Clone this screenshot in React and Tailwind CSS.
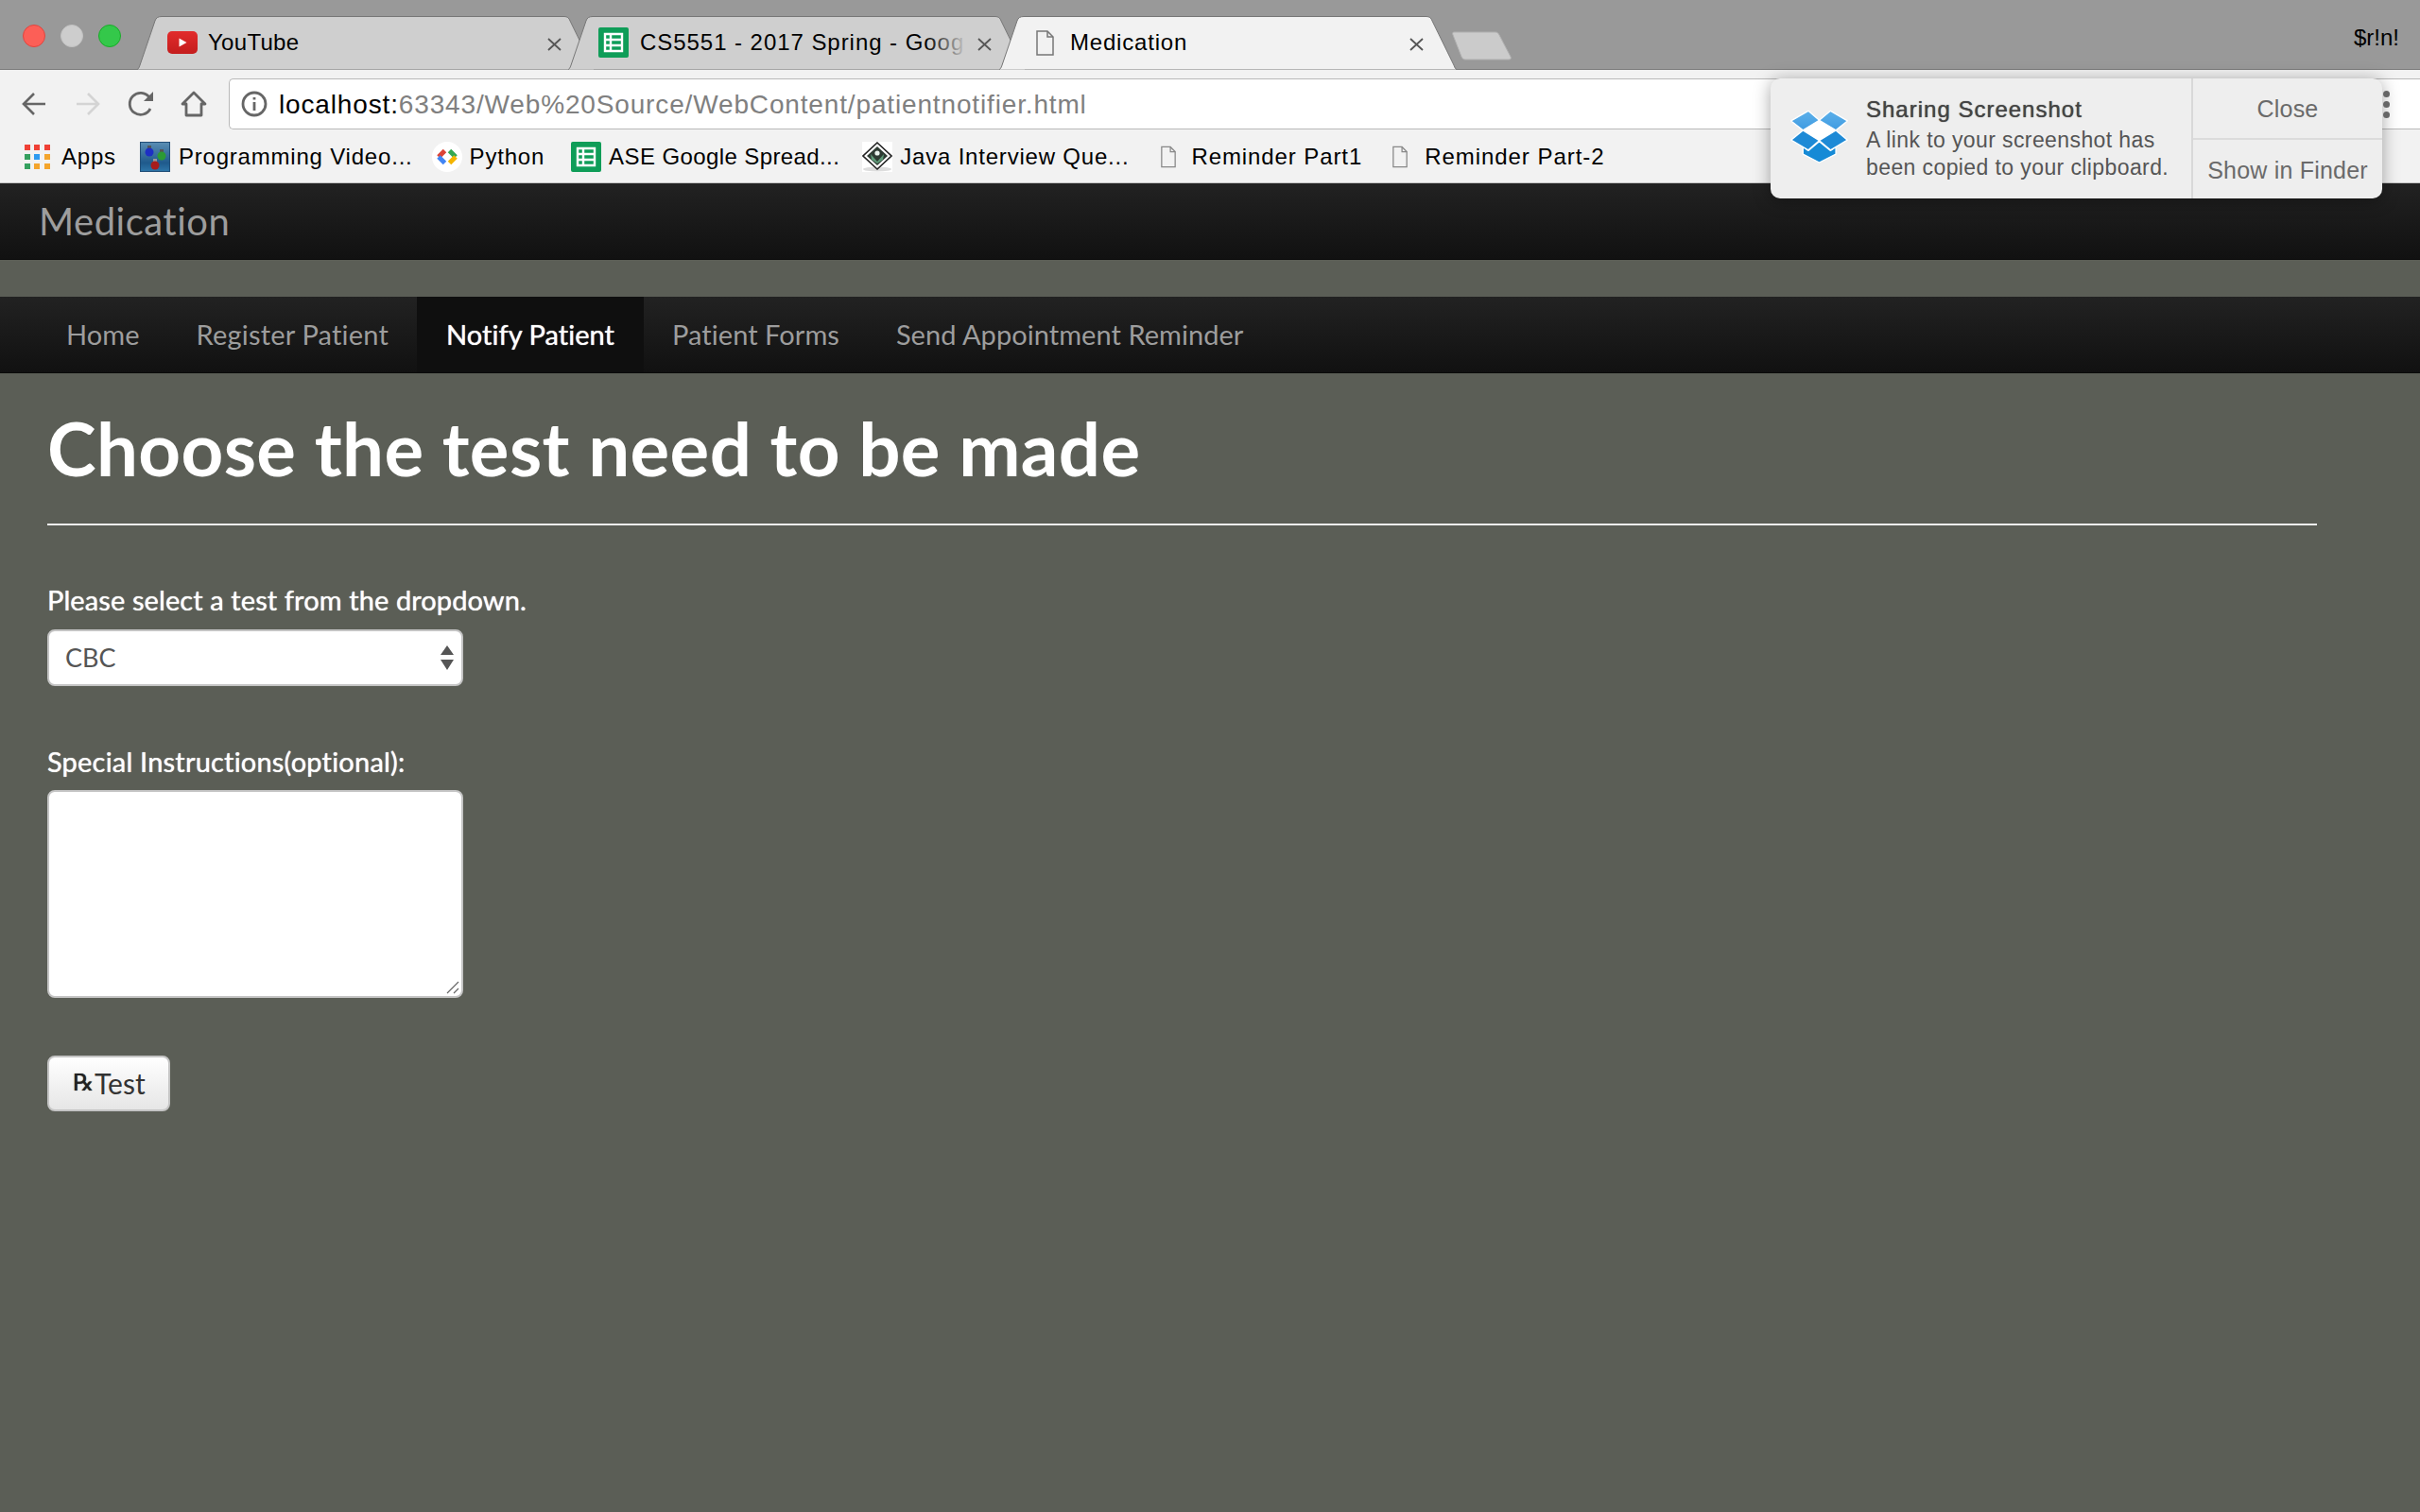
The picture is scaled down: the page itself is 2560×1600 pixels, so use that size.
import React from 'react'

const ubuntu = "font-['Lato','Noto_Sans',sans-serif]"
const chrome = "font-['Liberation_Sans',Arial,sans-serif]"

function TabShape({ fill, stroke }) {
  return (
    <svg className="absolute inset-0" width="484" height="57" viewBox="0 0 484 57">
      <path d="M0 56.5 C1 56.5 2 55 3 52 L19 5 C20 2 22 0.5 26 0.5 L452 0.5 C455 0.5 457 2 458 5 L481 52 C482 55 483 56.5 484 56.5" fill={fill} stroke={stroke} strokeWidth="1" />
    </svg>
  )
}

function FileIcon({ w = 19, h = 27, color = '#777' }) {
  return (
    <svg width={w} height={h} viewBox="0 0 19 27" fill="none" stroke={color} strokeWidth="1.5">
      <path d="M1 1 H12 L18 7 V26 H1 Z" />
      <path d="M12 1 V7 H18" />
    </svg>
  )
}

function SheetsIcon() {
  return (
    <svg width="32" height="32" viewBox="0 0 32 32">
      <rect width="32" height="32" rx="2" fill="#0f9d58" />
      <path d="M7 7 H25 V25 H7 Z M7 13 H25 M7 19 H25 M13 7 V25" fill="none" stroke="#fff" strokeWidth="2.4" />
    </svg>
  )
}

function YoutubeIcon() {
  return (
    <svg width="32" height="24" viewBox="0 0 32 24">
      <defs>
        <linearGradient id="ytRed" x1="0" y1="0" x2="0" y2="1">
          <stop offset="0" stopColor="#e22c2c" />
          <stop offset="1" stopColor="#c41d1d" />
        </linearGradient>
      </defs>
      <rect width="32" height="24" rx="5" fill="url(#ytRed)" />
      <path d="M12.5 7.5 L20.5 12 L12.5 16.5 Z" fill="#fff" />
    </svg>
  )
}

function CloseIcon() {
  return (
    <svg width="15" height="14" viewBox="0 0 15 14" stroke="#555" strokeWidth="1.8">
      <path d="M1 1 L14 13 M14 1 L1 13" />
    </svg>
  )
}

function AppsIcon() {
  const colors = ['#ef4136', '#ef4136', '#ef4136', '#35a05f', '#2e9bf0', '#f4a52c', '#35a05f', '#f4a52c', '#f4a52c']
  return (
    <div className="grid grid-cols-3 gap-[4px] w-[27px]">
      {colors.map((c, i) => (
        <svg key={i} width="6" height="6"><rect width="6" height="6" fill={c} /></svg>
      ))}
    </div>
  )
}

function ProgrammingIcon() {
  return (
    <svg width="32" height="32" viewBox="0 0 32 32">
      <defs>
        <linearGradient id="progBg" x1="0" y1="0" x2="0" y2="1">
          <stop offset="0" stopColor="#5c8fb5" />
          <stop offset="0.7" stopColor="#1f5a8c" />
          <stop offset="1" stopColor="#2f78ab" />
        </linearGradient>
      </defs>
      <rect width="32" height="32" fill="url(#progBg)" />
      <rect x="0.5" y="0.5" width="31" height="31" fill="none" stroke="#234f78" />
      <rect x="8" y="4" width="4" height="4" fill="#555" />
      <circle cx="10" cy="11" r="4.5" fill="#1d2fc4" />
      <rect x="21" y="8" width="4" height="4" fill="#555" />
      <circle cx="23" cy="15" r="4.5" fill="#2c9a34" />
      <rect x="14" y="18" width="4" height="3" fill="#999" />
      <circle cx="16" cy="25" r="4.5" fill="#a81c1c" />
    </svg>
  )
}

function GoogleDevIcon() {
  return (
    <svg width="32" height="32" viewBox="0 0 32 32" fill="none" strokeWidth="5">
      <circle cx="16" cy="16" r="16" fill="#fff" />
      <path d="M13.5 9.5 L7 16" stroke="#db4437" />
      <path d="M7 16 L13.5 22.5" stroke="#4285f4" />
      <path d="M18.5 9.5 L25 16" stroke="#34a853" />
      <path d="M25 16 L18.5 22.5" stroke="#f4b400" />
    </svg>
  )
}

function JavaIcon() {
  return (
    <svg width="32" height="32" viewBox="0 0 32 32">
      <rect width="32" height="32" fill="#ffffff" />
      <ellipse cx="16" cy="29" rx="15" ry="2.5" fill="#dddddd" />
      <path d="M16 1 L31 15 L16 29 L1 15 Z" fill="#fff" stroke="#222" strokeWidth="1.6" />
      <path d="M16 5 L27 15 L16 25 L5 15 Z" fill="#2e3b33" />
      <path d="M9 13 L16 21 L23 13 L22 19 L16 23 L10 19 Z" fill="#5f9a78" />
      <circle cx="16" cy="12" r="2.6" fill="#e8f2ec" />
    </svg>
  )
}

function DropboxIcon() {
  return (
    <svg width="61" height="57" viewBox="40 36 184 172">
      <defs>
        <linearGradient id="dbTop" x1="0" y1="0" x2="0" y2="1">
          <stop offset="0" stopColor="#5cb0ea" />
          <stop offset="1" stopColor="#3f9be1" />
        </linearGradient>
      </defs>
      <g stroke="#fff" strokeWidth="4" strokeLinejoin="round">
        <path d="M80 155 L97 167 L132 138 L168 167 L185 155 L185 178 L132 205 L80 178 Z" fill="#168ad6" />
        <path d="M42 72 L97 40 L132 70 L80 102 Z" fill="url(#dbTop)" />
        <path d="M132 70 L168 40 L222 72 L185 102 Z" fill="url(#dbTop)" />
        <path d="M42 133 L80 102 L132 135 L97 165 Z" fill="#1e8ad6" />
        <path d="M132 135 L185 102 L222 133 L168 165 Z" fill="#1e8ad6" />
      </g>
      <path d="M80 102 L132 70 L185 102 L132 135 Z" fill="#ffffff" />
    </svg>
  )
}

function Bookmark({ icon, label, className }) {
  return (
    <div className={`flex items-center ${className}`}>
      {icon}
      <span className="text-[24px] tracking-[0.8px] text-black whitespace-nowrap">{label}</span>
    </div>
  )
}

function NavItem({ label, active }) {
  return (
    <div className={active
      ? 'h-full flex items-center px-[31px] bg-[#0f0f0f] text-white [text-shadow:0_0_1px_white]'
      : 'h-full flex items-center px-[30px] text-[#9d9d9d]'}>
      {label}
    </div>
  )
}

export default function App() {
  return (
    <div className="relative h-screen w-full overflow-hidden flex flex-col bg-[#5b5e56]">
      {/* tab strip */}
      <div className={`h-[74px] shrink-0 bg-[#999999] border-b border-[#7d7d7d] flex items-start ${chrome}`}>
        <div className="w-[145px] shrink-0 flex gap-[16px] pl-[24px] pt-[26px]">
          <div className="w-[24px] h-[24px] rounded-full bg-[#fc5f57] border border-[#e0443e]" />
          <div className="w-[24px] h-[24px] rounded-full bg-[#cdcdcd] border border-[#c2c2c2]" />
          <div className="w-[24px] h-[24px] rounded-full bg-[#34c84a] border border-[#1aab29]" />
        </div>
        <div className="flex mt-[17px] h-[57px]">
          <div className="relative w-[484px] h-[57px]">
            <TabShape fill="#cfcfcf" stroke="#777" />
            <div className="relative h-[56px] flex items-center pl-[32px]">
              <YoutubeIcon />
              <span className="ml-[11px] text-[24px] tracking-[0.3px] text-black">YouTube</span>
              <div className="absolute right-[35px] top-[23px] flex"><CloseIcon /></div>
            </div>
          </div>
          <div className="relative w-[484px] h-[57px] ml-[-28px]">
            <TabShape fill="#cfcfcf" stroke="#777" />
            <div className="relative h-[56px] flex items-center pl-[32px]">
              <SheetsIcon />
              <div className="relative ml-[12px] w-[346px]">
                <span className="text-[24px] tracking-[0.95px] text-black whitespace-nowrap">CS5551 - 2017 Spring - Goog</span>
                <div className="absolute inset-y-0 right-0 w-[44px] bg-gradient-to-r from-transparent to-[#cfcfcf]" />
              </div>
              <div className="absolute right-[36px] top-[23px] flex"><CloseIcon /></div>
            </div>
          </div>
          <div className="relative w-[484px] h-[57px] ml-[-28px]">
            <TabShape fill="#f2f2f2" stroke="#777" />
            <div className="relative h-[56px] flex items-center pl-[39px]">
              <FileIcon />
              <span className="ml-[17px] text-[24px] tracking-[0.8px] text-black">Medication</span>
              <div className="absolute right-[35px] top-[23px] flex"><CloseIcon /></div>
            </div>
          </div>
          <svg className="ml-[-5px] mt-[16px]" width="63" height="31" viewBox="0 0 63 31">
            <path d="M2 1 H46 C48 1 49 2 50 4 L62 27 C63 29 62 30 60 30 H14 C12 30 11 29 10 27 L1 4 C0 2 1 1 2 1 Z" fill="#cbcbcb" stroke="#b0b0b0" />
          </svg>
        </div>
        <span className="ml-auto mr-[22px] mt-[26px] text-[24px] leading-[28px] text-black">$r!n!</span>
      </div>

      {/* address bar */}
      <div className={`h-[72px] shrink-0 bg-[#f2f2f2] flex items-center pl-[23px] ${chrome}`}>
        <svg width="26" height="26" viewBox="0 0 26 26" fill="none" stroke="#666" strokeWidth="2.6">
          <path d="M25 13 H3 M13 2 L2 13 L13 24" />
        </svg>
        <svg className="ml-[31px]" width="26" height="26" viewBox="0 0 26 26" fill="none" stroke="#d4d4d4" strokeWidth="2.6">
          <path d="M1 13 H23 M13 2 L24 13 L13 24" />
        </svg>
        <svg className="ml-[28px]" width="30" height="28" viewBox="0 0 30 28" fill="none" stroke="#666" strokeWidth="2.8">
          <path d="M25 19 A11.5 11.5 0 1 1 24 7" />
          <path d="M28 1 V11 H18 Z" fill="#666" stroke="none" />
        </svg>
        <svg className="ml-[27px]" width="28" height="28" viewBox="0 0 28 28" fill="none" stroke="#666" strokeWidth="2.8">
          <path d="M14 2 L26 14 H22 V26 H6 V14 H2 Z" strokeLinejoin="round" />
        </svg>
        <div className="ml-[23px] flex-1 h-[54px] bg-white border border-[#b9b9b9] border-r-0 rounded-l-[5px] flex items-center pl-[12px]">
          <svg width="28" height="28" viewBox="0 0 28 28" fill="none" stroke="#666" strokeWidth="2.8">
            <circle cx="14" cy="14" r="12" />
            <path d="M14 12 V21 M14 7 V9.5" />
          </svg>
          <span className="ml-[12px] pt-[2px] text-[28px] tracking-[0.85px] text-black whitespace-nowrap">
            localhost:<span className="text-[#808080]">63343/Web%20Source/WebContent/patientnotifier.html</span>
          </span>
        </div>
      </div>

      {/* bookmarks */}
      <div className={`h-[48px] shrink-0 bg-[#f2f2f2] border-b border-[#c4c4c4] flex items-center pl-[26px] pb-[8px] ${chrome}`}>
        <Bookmark icon={<AppsIcon />} label={<span className="ml-[12px]">Apps</span>} />
        <Bookmark className="ml-[25px]" icon={<ProgrammingIcon />} label={<span className="ml-[9px]">Programming Video...</span>} />
        <Bookmark className="ml-[20px]" icon={<GoogleDevIcon />} label={<span className="ml-[8px]">Python</span>} />
        <Bookmark className="ml-[28px]" icon={<SheetsIcon />} label={<span className="ml-[8px] tracking-[0.4px]">ASE Google Spread...</span>} />
        <Bookmark className="ml-[24px]" icon={<JavaIcon />} label={<span className="ml-[8px]">Java Interview Que...</span>} />
        <Bookmark className="ml-[33px]" icon={<FileIcon w={16} h={24} color="#888" />} label={<span className="ml-[17px] tracking-[0.9px]">Reminder Part1</span>} />
        <Bookmark className="ml-[32px]" icon={<FileIcon w={16} h={24} color="#888" />} label={<span className="ml-[18px] tracking-[0.95px]">Reminder Part-2</span>} />
      </div>

      {/* page */}
      <div className={`flex-1 flex flex-col ${ubuntu}`}>
        <div className="h-[81px] shrink-0 bg-gradient-to-b from-[#222222] to-[#111111] border-b border-[#0a0a0a] flex items-center pl-[41px] text-[40px] tracking-[0.5px] text-[#9d9d9d]">
          Medication
        </div>
        <div className="h-[81px] shrink-0 mt-[39px] bg-gradient-to-b from-[#222222] to-[#111111] border-b border-[#0a0a0a] flex items-center pl-[40px] text-[29px] tracking-[0.05px]">
          <NavItem label="Home" />
          <NavItem label={<span className="tracking-[0.2px]">Register Patient</span>} />
          <NavItem label="Notify Patient" active />
          <NavItem label="Patient Forms" />
          <NavItem label="Send Appointment Reminder" />
        </div>
        <div className="pl-[50px] pr-[109px]">
          <h1 className="mt-[36px] text-[78px] leading-[86px] tracking-[0.37px] font-bold text-white">Choose the test need to be made</h1>
          <div className="mt-[37px] h-[2px] bg-[#eeeeee]" />
          <label className="block mt-[61px] text-[29px] leading-[36px] tracking-[0.1px] text-white [text-shadow:0_0_1px_white]">Please select a test from the dropdown.</label>
          <div className="relative mt-[13px] w-[440px] h-[60px] bg-white rounded-[8px] border-2 border-[#c4c4c4] flex items-center pl-[17px] text-[27px] text-[#555555]">
            CBC
            <svg className="absolute right-[8px] top-[15px]" width="14" height="26" viewBox="0 0 14 26" fill="#555">
              <path d="M7 0 L14 10 H0 Z M0 15 H14 L7 26 Z" />
            </svg>
          </div>
          <label className="block mt-[62px] text-[29px] leading-[36px] tracking-[0.2px] text-white [text-shadow:0_0_1px_white]">Special Instructions(optional):</label>
          <div className="relative mt-[12px] w-[440px] h-[220px] bg-white rounded-[8px] border-2 border-[#c4c4c4]">
            <svg className="absolute right-[2px] bottom-[2px]" width="14" height="14" viewBox="0 0 14 14" stroke="#666" strokeWidth="1.2">
              <path d="M1 13 L13 1 M8 13 L13 8" />
            </svg>
          </div>
          <button className="mt-[61px] w-[130px] h-[59px] rounded-[8px] border-2 border-[#c4c4c4] bg-gradient-to-b from-white to-[#e6e6e6] flex items-center pl-[25px] pb-[2px] text-[30px] leading-[40px] text-[#333333]">
            <span className="w-[23px] font-['DejaVu_Sans',sans-serif] text-[25px] text-left text-[#222222] [text-shadow:0_0_1px_#222222]">℞</span>
            <span>Test</span>
          </button>
        </div>
      </div>

      {/* dropbox notification */}
      <div className={`absolute left-[1873px] top-[83px] w-[647px] h-[127px] rounded-[10px] bg-[#eeeeee] shadow-[0_2px_18px_rgba(0,0,0,0.35)] flex ${chrome}`}>
        <div className="w-[447px] flex border-r-2 border-[#d8d8d8] pl-[21px]">
          <div className="pt-[33px]"><DropboxIcon /></div>
          <div className="ml-[19px] pt-[18px] text-[23px] leading-[29px] tracking-[0.4px] text-[#555555] whitespace-nowrap">
            <div className="text-[24px] tracking-[1px] font-medium text-[#444444] mb-[4px] [text-shadow:0_0_1px_#444444]">Sharing Screenshot</div>
            <div>A link to your screenshot has</div>
            <div>been copied to your clipboard.</div>
          </div>
        </div>
        <div className="flex-1 flex flex-col text-[25px] tracking-[0.2px] text-[#6a6a6a]">
          <div className="h-[65px] pt-[2px] border-b-2 border-[#dcdcdc] flex items-center justify-center">Close</div>
          <div className="flex-1 pt-[4px] flex items-center justify-center">Show in Finder</div>
        </div>
      </div>

      {/* chrome menu dots peeking out beside the notification */}
      <div className="absolute left-[2521px] top-[96px] flex flex-col gap-[4px]">
        <div className="w-[7px] h-[7px] rounded-full bg-[#666666]" />
        <div className="w-[7px] h-[7px] rounded-full bg-[#666666]" />
        <div className="w-[7px] h-[7px] rounded-full bg-[#666666]" />
      </div>
    </div>
  )
}
